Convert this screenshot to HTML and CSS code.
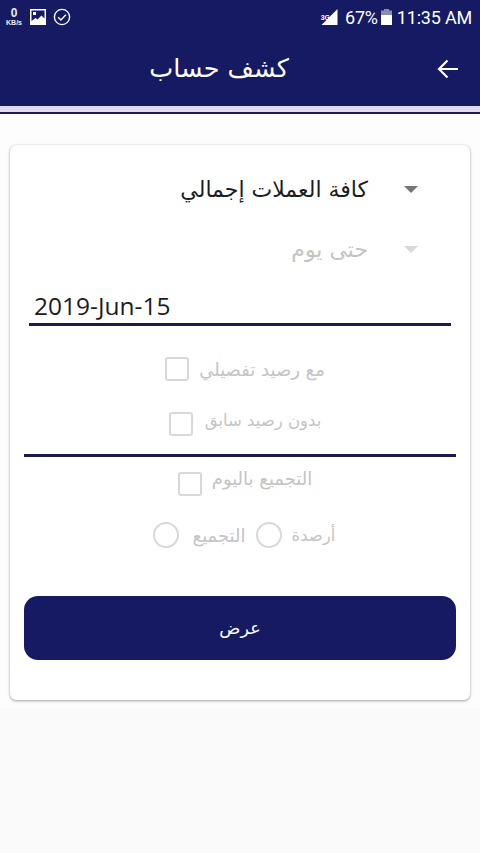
FILE: index.html
```html
<!DOCTYPE html>
<html lang="ar">
<head>
  <meta charset="UTF-8">
  <meta name="viewport" content="width=device-width, initial-scale=1.0">
  <title>كشف حساب</title>
  <link rel="stylesheet" href="styles.css">
</head>
<body>
  <header class="top">
    <div class="status">
      <div class="status-left">
        <span class="speed"><b>0</b><i>KB/s</i></span>
        <!-- picture notification -->
        <svg class="ic-pic" viewBox="0 0 16 16"><path fill="#fff" d="M0 0h16v16H0z"/><path fill="#161a62" d="M1.500 1.500h13v8l-3-3-4 4-2-1.500-4 3z"/><path fill="#fff" d="M3 3h3v3H3z"/></svg>
        <svg class="ic-check" viewBox="0 0 18 18"><circle cx="9" cy="9" r="7.600" fill="none" stroke="#fff" stroke-width="1.400"/><path d="M5.200 9.300l2.700 2.600 5-5.200" fill="none" stroke="#fff" stroke-width="1.400"/></svg>
      </div>
      <div class="status-right">
        <span class="net">3G</span>
        <svg class="ic-signal" viewBox="0 0 16 16"><path fill="#fff" d="M16 0v16H0z"/></svg>
        <span class="pct">67%</span>
        <svg class="ic-batt" viewBox="0 0 11 16"><path fill="#8a8cb0" d="M3 0h5v1.500h3V6H0V1.500h3z"/><path fill="#fff" d="M0 6h11v10H0z"/></svg>
        <span class="clock">11:35 AM</span>
      </div>
    </div>
    <div class="toolbar">
      <h1 class="title">كشف حساب</h1>
      <svg class="ic-back" viewBox="0 0 24 24"><path d="M22 12H3M11.500 3.500L3 12l8.500 8.500" fill="none" stroke="#fff" stroke-width="2.200"/></svg>
    </div>
  </header>
  <div class="rule-light"></div>
  <div class="rule-dark"></div>

  <main class="content">
    <section class="card">
      <div class="select select-first">
        <span class="select-text">كافة العملات إجمالي</span>
        <span class="caret"></span>
      </div>
      <div class="select select-off">
        <span class="select-text">حتى يوم</span>
        <span class="caret"></span>
      </div>
      <div class="date">2019-Jun-15</div>

      <label class="check check-a"><span>مع رصيد تفصيلي</span><i class="box"></i></label>
      <label class="check check-b"><span>بدون رصيد سابق</span><i class="box"></i></label>
      <div class="divider"></div>
      <label class="check check-c"><span>التجميع باليوم</span><i class="box"></i></label>

      <div class="radios">
        <span class="radio-first">أرصدة</span><i class="radio"></i>
        <span class="radio-label">التجميع</span><i class="radio radio-last"></i>
      </div>

      <button class="show-btn">عرض</button>
    </section>
  </main>
</body>
</html>
```

FILE: styles.css
```css
body {
  margin: 0;
  background: #fafafa;
  font-family: "DejaVu Sans", sans-serif;
  color: #1c1c1c;
}

.top {
  background: #161a62;
  height: 106px;
  color: #fff;
}

.status {
  height: 34px;
  display: flex;
  justify-content: space-between;
  align-items: center;
  padding: 0 8px 0 4px;
  direction: ltr;
}

.status-left,
.status-right {
  display: flex;
  align-items: center;
}

.speed {
  width: 20px;
  text-align: center;
  font-family: "Liberation Sans", sans-serif;
  line-height: 8px;
  color: #eee;
}

.speed b {
  display: block;
  font-size: 12px;
  line-height: 11px;
}

.speed i {
  display: block;
  font-size: 7px;
  font-style: normal;
  font-weight: bold;
}

.ic-pic {
  width: 16px;
  height: 16px;
  margin-left: 6px;
}

.ic-check {
  width: 18px;
  height: 18px;
  margin-left: 7px;
}

.net {
  font: bold 7px "Liberation Sans", sans-serif;
  align-self: flex-start;
  margin: 7px -9px 0 0;
  position: relative;
}

.ic-signal {
  width: 17px;
  height: 16px;
}

.pct,
.clock {
  font-family: Roboto, sans-serif;
  font-size: 18px;
  letter-spacing: -0.2px;
}

.pct {
  margin-left: 7px;
}

.ic-batt {
  width: 11px;
  height: 16px;
  margin-left: 3px;
}

.clock {
  margin-left: 5px;
}

.toolbar {
  height: 68px;
  display: flex;
  align-items: center;
  justify-content: center;
  padding-right: 42px;
  position: relative;
}

.title {
  margin: 1px 0 0;
  font-size: 25.5px;
  line-height: 1;
  font-weight: normal;
}

.ic-back {
  position: absolute;
  right: 20px;
  top: 23px;
  width: 24px;
  height: 24px;
}

.rule-light {
  height: 6px;
  background: #dcdcec;
}

.rule-dark {
  height: 2px;
  background: #1c1a50;
}

.content {
  background: #fdfdfd;
  padding: 31px 10px 8px;
}

.card {
  height: 555px;
  box-sizing: border-box;
  background: #fff;
  border-radius: 6px;
  box-shadow: 0 1px 3px rgba(0, 0, 0, 0.35), 0 0 1px rgba(0, 0, 0, 0.2);
  padding: 1px 14px 0;
  overflow: hidden;
}

.select {
  display: flex;
  justify-content: flex-end;
  align-items: center;
  height: 30px;
  padding-right: 38px;
  font-size: 22px;
}

.select-first {
  margin-top: 28px;
}

.select-off {
  margin-top: 30px;
  color: #c4c4c4;
}

.caret {
  width: 0;
  height: 0;
  margin-left: 36px;
  border-left: 7px solid transparent;
  border-right: 7px solid transparent;
  border-top: 7px solid #757575;
}

.select-off .caret {
  border-top-color: #d8d8d8;
}

.date {
  margin: 29px 5px 0;
  height: 30px;
  border-bottom: 3px solid #1c1a50;
  font-family: "Open Sans", sans-serif;
  font-size: 24.5px;
  line-height: 26px;
  padding-left: 5px;
  direction: ltr;
}

.check {
  display: flex;
  justify-content: center;
  align-items: center;
  flex-direction: row-reverse;
  padding-left: 10px;
  color: #c4c4c4;
  font-size: 18px;
  height: 30px;
}

.check span {
  margin-left: 10px;
}

.box {
  width: 20px;
  height: 20px;
  border: 2px solid #d8d8d8;
  border-radius: 3px;
}

.check-a {
  margin-top: 28px;
}

.check-b {
  margin-top: 21px;
  font-size: 16.5px;
}

.check-b span {
  margin-left: 12px;
}

.check-b .box {
  margin-top: 8px;
}

.divider {
  height: 3px;
  margin-top: 19px;
  background: #1c1a50;
}

.check-c {
  margin-top: 6px;
}

.check-c .box {
  margin-top: 12px;
}

.radios {
  display: flex;
  justify-content: center;
  align-items: center;
  margin-top: 27px;
  padding-left: 8px;
  direction: rtl;
  color: #c4c4c4;
  font-size: 18px;
  height: 30px;
}

.radio-first {
  font-size: 16.5px;
}

.radio {
  width: 22px;
  height: 22px;
  border: 2px solid #d8d8d8;
  border-radius: 50%;
  margin-right: 10px;
}

.radio-label {
  margin-right: 10px;
}

.radio-last {
  margin-right: 14px;
}

.show-btn {
  display: block;
  width: 100%;
  height: 64px;
  margin-top: 46px;
  border: none;
  border-radius: 14px;
  background: #161a62;
  color: #fff;
  font-family: "DejaVu Sans", sans-serif;
  font-size: 17.5px;
}
```
